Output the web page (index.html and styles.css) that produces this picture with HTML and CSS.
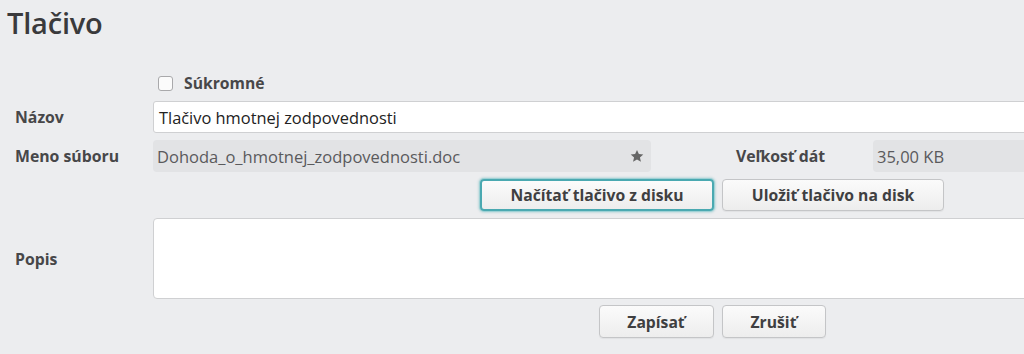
FILE: index.html
```html
<!DOCTYPE html>
<html lang="sk">
<head>
<meta charset="utf-8">
<title>Tlačivo</title>
<link rel="stylesheet" href="styles.css">
</head>
<body>
<div class="page">
  <h1 class="title">Tlačivo</h1>
  <div class="form">
    <div class="row row-check">
      <div class="label"></div>
      <label class="check"><span class="box"></span><span>Súkromné</span></label>
    </div>
    <div class="row row-name">
      <div class="label">Názov</div>
      <div class="input">Tlačivo hmotnej zodpovednosti</div>
    </div>
    <div class="row row-file">
      <div class="label">Meno súboru</div>
      <div class="field file">
        <span>Dohoda_o_hmotnej_zodpovednosti.doc</span>
        <svg class="star" viewBox="0 0 24 24" width="14" height="14"><path d="M12 1.5l3.2 7.1 7.6.7-5.8 5.1 1.8 7.6L12 18l-6.8 4 1.8-7.6L1.2 9.3l7.6-.7z" fill="#666"/></svg>
      </div>
      <div class="label label2">Veľkosť dát</div>
      <div class="field size">35,00 KB</div>
    </div>
    <div class="row row-btns">
      <div class="label"></div>
      <div class="actions">
        <button class="btn btn-focus">Načítať tlačivo z disku</button>
        <button class="btn">Uložiť tlačivo na disk</button>
      </div>
    </div>
    <div class="row row-desc">
      <div class="label">Popis</div>
      <div class="textarea"></div>
    </div>
    <div class="row row-foot">
      <div class="label"></div>
      <div class="actions">
        <button class="btn btn-sm">Zapísať</button>
        <button class="btn btn-sm">Zrušiť</button>
      </div>
    </div>
  </div>
</div>
</body>
</html>
```

FILE: styles.css
```css
html, body {
  margin: 0;
  padding: 0;
  background: #ecedef;
  overflow: hidden;
}
body {
  font-family: "Open Sans", "Noto Sans", sans-serif;
  color: #444;
  width: 1024px;
  height: 354px;
}
.page {
  width: 1280px;
}
.title {
  margin: 0;
  padding: 3px 0 0 7px;
  height: 43px;
  font-size: 29px;
  line-height: 40px;
  font-weight: 600;
  color: #3a3a3c;
  letter-spacing: -0.2px;
}
.form {
  padding-left: 15px;
  width: 1256px;
}
.row {
  display: flex;
  align-items: center;
}
.label {
  width: 138px;
  flex: none;
  font-size: 15.8px;
  font-weight: 700;
  color: #474749;
}
.row-check {
  margin-top: 28px;
  height: 18px;
}
.check {
  display: flex;
  align-items: center;
  font-size: 15.7px;
  font-weight: 700;
  color: #474749;
}
.box {
  width: 13px;
  height: 13px;
  margin-left: 5px;
  margin-right: 11px;
  border: 1px solid #a9a9ab;
  border-radius: 3px;
  background: #fbfbfb;
}
.row-name {
  margin-top: 9px;
  height: 32px;
}
.input {
  flex: 1;
  height: 32px;
  box-sizing: border-box;
  background: #fff;
  border: 1px solid #cfd0d2;
  border-radius: 3px;
  padding: 0 5px;
  display: flex;
  align-items: center;
  font-size: 16.4px;
  color: #222;
}
.row-file {
  margin-top: 7px;
  height: 32px;
}
.field {
  height: 32px;
  box-sizing: border-box;
  background: #e2e3e5;
  border-radius: 4px;
  display: flex;
  align-items: center;
  font-size: 16.5px;
  color: #5a5a5c;
}
.file {
  width: 498px;
  padding: 0 7px 0 4px;
  justify-content: space-between;
}
.star {
  display: block;
}
.label2 {
  margin-left: 85px;
  width: 137px;
}
.size {
  flex: 1;
  padding: 0 4px;
}
.row-btns {
  margin-top: 7px;
  height: 32px;
}
.actions {
  flex: 1;
  display: flex;
  justify-content: center;
  gap: 8px;
}
.btn {
  font-family: "Open Sans", "Noto Sans", sans-serif;
  font-size: 15.7px;
  font-weight: 700;
  color: #3f3f41;
  height: 32px;
  padding: 0 28px;
  background: linear-gradient(#fbfbfb, #ededed);
  border: 1px solid #c4c5c7;
  border-radius: 4px;
  box-shadow: 0 1px 1px rgba(0,0,0,0.05);
}
.btn-focus {
  border: 2px solid #4aa9b1;
  box-shadow: 0 0 0 1px #9fd1d5, 0 0 2px 2px rgba(74,169,177,0.25);
  width: 234px;
  padding: 0;
}
.row-btns .btn:not(.btn-focus) {
  width: 222px;
  padding: 0;
}
.row-desc {
  margin-top: 7px;
  height: 81px;
}
.textarea {
  flex: 1;
  height: 81px;
  box-sizing: border-box;
  background: #fff;
  border: 1px solid #cfd0d2;
  border-radius: 4px;
}
.row-foot {
  margin-top: 6px;
  height: 33px;
}
.btn-sm {
  height: 33px;
  padding: 0;
}
.row-foot .btn:first-child {
  width: 115px;
}
.row-foot .btn:last-child {
  width: 104px;
}
```
